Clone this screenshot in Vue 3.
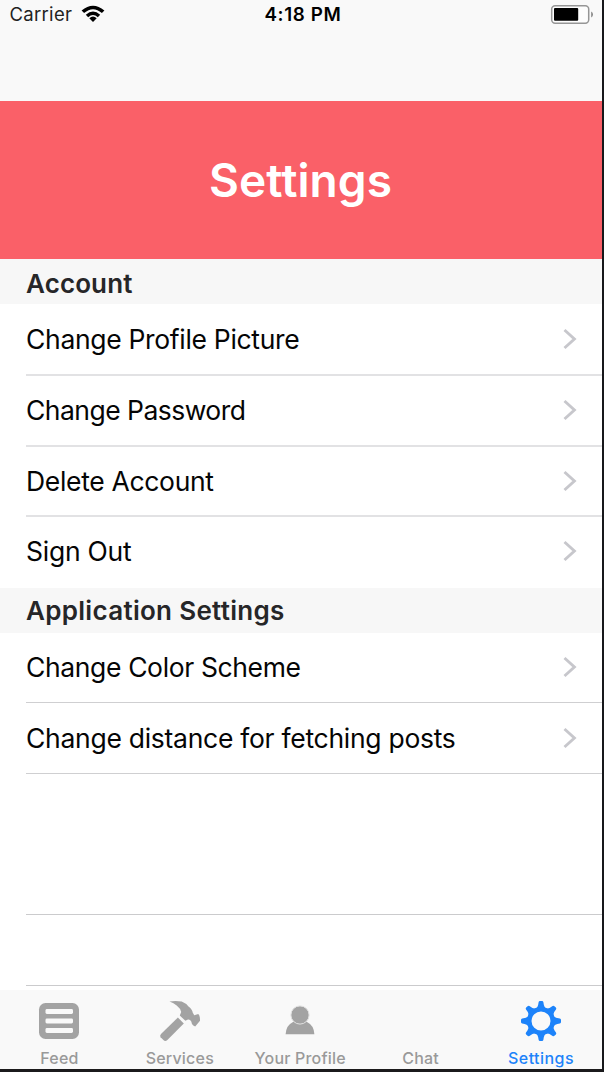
<script setup>
const account = [
  { label: 'Change Profile Picture', cls: 'profile' },
  { label: 'Change Password', cls: 'password' },
  { label: 'Delete Account', cls: 'delete' },
  { label: 'Sign Out', cls: 'signout' },
]
const application = [
  { label: 'Change Color Scheme', cls: 'scheme' },
  { label: 'Change distance for fetching posts', cls: 'distance' },
]
const tabs = [
  { label: 'Feed', icon: 'feed' },
  { label: 'Services', icon: 'hammer' },
  { label: 'Your Profile', icon: 'person' },
  { label: 'Chat', icon: '' },
  { label: 'Settings', icon: 'gear', active: true },
]
const teeth = [0, 45, 90, 135, 180, 225, 270, 315]
</script>

<template>
  <div class="device">
    <header class="status">
      <div class="carrier">
        <span>Carrier</span>
        <svg class="wifi" width="24" height="18" viewBox="0 0 24 18">
          <path d="M.6 5.6Q12-4.2 23.4 5.6L20.9 8.1Q12 .5 3.1 8.1Z" />
          <path d="M4.8 9.8Q12 3.4 19.2 9.8L16.8 12.2Q12 8 7.2 12.2Z" />
          <path d="M8.3 13.2Q12 10 15.7 13.2L12 16.9Z" />
        </svg>
      </div>
      <span class="clock">4:18 PM</span>
      <svg class="battery" width="44" height="20" viewBox="0 0 44 20">
        <rect x="1.7" y="1.7" width="37" height="17.5" rx="3.4" fill="#fdfdfd" stroke="#969696" stroke-width="1.5" />
        <rect x="4" y="4" width="24.2" height="12.8" rx="1" fill="#000" />
        <path d="M41.2 7.6Q43 8.5 43 10.4T41.2 13.4Z" fill="#868686" />
      </svg>
    </header>
    <section class="banner"><h1>Settings</h1></section>
    <main class="list">
      <h2><span class="h-account">Account</span></h2>
      <div v-for="item in account" :key="item.label" class="row account">
        <span :class="item.cls">{{ item.label }}</span>
        <svg class="chevron" width="14" height="22" viewBox="0 0 14 22"><path d="M1.5 2L11.4 11L1.5 20" /></svg>
      </div>
      <h2 class="second"><span class="h-app">Application Settings</span></h2>
      <div v-for="item in application" :key="item.label" class="row">
        <span :class="item.cls">{{ item.label }}</span>
        <svg class="chevron" width="14" height="22" viewBox="0 0 14 22"><path d="M1.5 2L11.4 11L1.5 20" /></svg>
      </div>
      <div class="row blank tall"></div>
      <div class="row blank"></div>
    </main>
    <nav class="tabs">
      <div v-for="tab in tabs" :key="tab.label" class="tab" :class="{ active: tab.active }">
        <svg width="42" height="42" viewBox="0 0 42 42">
          <template v-if="tab.icon === 'feed'">
            <rect x="1" y="3" width="40" height="36" rx="6.5" />
            <rect class="hole" x="7.5" y="9" width="27.5" height="5" rx="1.4" />
            <rect class="hole" x="7.5" y="18.5" width="27.5" height="5" rx="1.4" />
            <rect class="hole" x="7.5" y="28" width="27.5" height="5" rx="1.4" />
          </template>
          <template v-else-if="tab.icon === 'hammer'">
            <path d="M10.5 1.5Q17 .6 22.7 1.6Q27 3.4 29.5 6.4Q33.6 9.6 33.7 12.6L35.2 15.2L39.3 14.1Q41.2 16 41 20.8L36.2 26.4Q32.8 25.5 32.4 21.8Q31 19.2 29 19.6L26.4 20.8L20.8 15.6L22.2 12Q21.3 8.4 17.7 5.6Q14.8 3 10.5 1.5Z" />
            <path d="M18.9 17.5L24.8 23.4L8.4 40Q6.2 41.8 4.4 40L1.6 37.2Q.4 35.5 2 33.9Z" />
          </template>
          <template v-else-if="tab.icon === 'person'">
            <path d="M6.6 34.2Q7.2 25 14 21.9H28Q34.8 25 35.4 34.2Z" />
            <circle cx="21" cy="15" r="9.1" stroke="#e2e2e2" stroke-width="1" />
          </template>
          <template v-else-if="tab.icon === 'gear'">
            <circle cx="21" cy="21" r="11.8" fill="none" stroke="currentColor" stroke-width="4.6" />
            <path v-for="angle in teeth" :key="angle" d="M15 9.2Q18.1 7.5 18.6 2.2Q18.8 1 20 1H22Q23.2 1 23.4 2.2Q23.9 7.5 27 9.2L21 9.8Z" :transform="`rotate(${angle} 21 21)`" />
          </template>
        </svg>
        <span :class="'t-' + (tab.icon || 'chat')">{{ tab.label }}</span>
      </div>
    </nav>
  </div>
</template>

<style>
body { margin: 0; background: #1b1a1c; }
</style>
<style scoped>
.device { width: 602px; height: 1069px; border-right: 2px solid #17181b; border-bottom: 3px solid #1b1a1c; background: #fff; font-family: Inter, "Liberation Sans", sans-serif; display: flex; flex-direction: column; overflow: hidden; white-space: nowrap; }
.status { height: 101px; background: #f9f9f9; display: grid; grid-template-columns: 1fr auto 1fr; align-items: start; flex: none; }
.carrier { display: flex; padding-left: 9.5px; font-size: 18.5px; line-height: 29px; color: #222; letter-spacing: .3px; }
.wifi { margin: 5px 0 0 8.5px; }
.clock { font-size: 18.8px; font-weight: 600; line-height: 29px; letter-spacing: .65px; padding-left: 4px; }
.battery { justify-self: end; margin: 4px 8px 0 0; }
.banner { height: 158px; background: #fa6068; flex: none; display: flex; justify-content: center; }
h1 { margin: 0; color: #fff; font-size: 46px; line-height: 158px; font-weight: 600; letter-spacing: .1px; padding-right: 1px; }
.list { height: 731px; flex: none; display: flex; flex-direction: column; }
h2 { margin: 0; height: 45px; box-sizing: border-box; padding: 2px 26px 0; background: #f7f7f7; color: #262628; font-size: 26px; line-height: 45px; font-weight: 600; flex: none; letter-spacing: .12px; }
h2.second { padding-top: 0; line-height: 46px; letter-spacing: .3px; }
.row { height: 71px; flex: none; box-sizing: border-box; margin-left: 26px; padding-right: 25px; border-bottom: 1px solid #cfcfd1; display: flex; align-items: center; justify-content: space-between; font-size: 26.5px; letter-spacing: -.32px; color: #050505; }
.row.account { border-bottom: 2px solid #e2e2e4; }
.row.account:nth-child(2) { height: 72px; }
.row.account:nth-child(3) { padding-bottom: 2px; }
.row.account:nth-child(4) { height: 70px; padding-bottom: 1px; }
.row.account:nth-child(5) { border: 0; height: 71px; padding-bottom: 3px; }
.row:nth-child(7) { height: 70px; padding-bottom: 2px; }
.row:nth-child(8) { padding-bottom: 1px; }
.password { letter-spacing: -.53px; }
.signout { letter-spacing: -.26px; }
.scheme { letter-spacing: -.37px; }
.distance { letter-spacing: -.28px; }
.row.tall { height: 141px; }
.row.blank { border-color: #cbcbcd; }
.row.blank:last-child { height: 71px; }
.chevron { fill: none; stroke: #c7c7cc; stroke-width: 2.9; }
.tabs { height: 79px; background: #f9f9f9; display: grid; grid-template-columns: repeat(5, 120.4px); flex: none; }
.tab { display: flex; flex-direction: column; align-items: center; padding-top: 10px; color: #999; font-size: 16px; font-weight: 500; line-height: 20px; letter-spacing: .2px; }
.tab svg { fill: #a3a3a3; color: #1d83fa; display: block; margin: 0 2px 6px 0; }
.tab span { padding-right: 1.5px; }
.tab .t-gear { letter-spacing: .45px; }
.tab.active { color: #1d83fa; }
.tab.active svg { fill: #1d83fa; }
.tab .hole { fill: #f9f9f9; }
</style>
